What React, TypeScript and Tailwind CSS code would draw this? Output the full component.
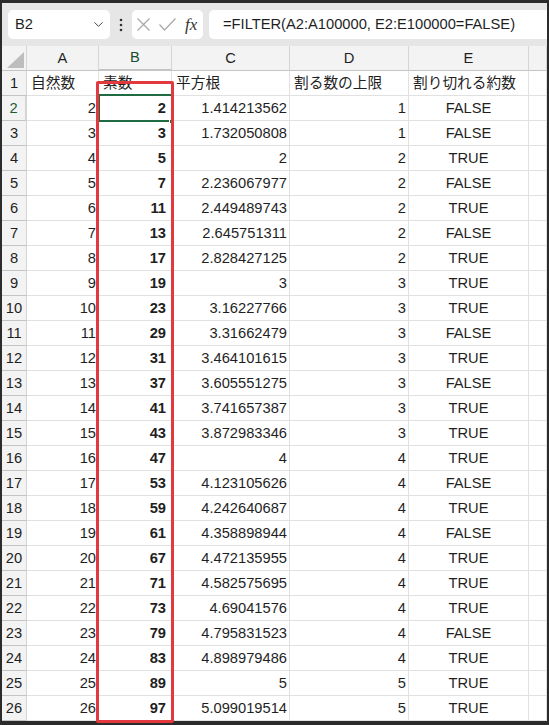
import { ChevronDown } from "lucide-react";

const primes = [2, 3, 5, 7, 11, 13, 17, 19, 23, 29, 31, 37, 41, 43, 47, 53, 59, 61, 67, 71, 73, 79, 83, 89, 97];
const roots = [
  "1.414213562", "1.732050808", "2", "2.236067977", "2.449489743", "2.645751311", "2.828427125",
  "3", "3.16227766", "3.31662479", "3.464101615", "3.605551275", "3.741657387", "3.872983346",
  "4", "4.123105626", "4.242640687", "4.358898944", "4.472135955", "4.582575695", "4.69041576",
  "4.795831523", "4.898979486", "5", "5.099019514",
];
const limits = [1, 1, 2, 2, 2, 2, 2, 3, 3, 3, 3, 3, 3, 3, 4, 4, 4, 4, 4, 4, 4, 4, 4, 5, 5];
const divisible = [
  false, false, true, false, true, false, true, true, true, false, true, false, true,
  true, true, false, true, false, true, true, true, false, true, true, true,
];

const cell = "flex items-center border-r border-b border-[#e1e1e1] bg-white overflow-hidden whitespace-nowrap";
const head = "flex items-center justify-center border-r border-b border-r-[#d5d5d5] border-b-[#c4c4c4] bg-[#f3f3f3]";

export default function App() {
  return (
    <div className="relative w-[549px] h-[725px] bg-[#2b2b2b] pt-[3px] px-[2px] font-['Liberation_Sans','Noto_Sans_CJK_JP',sans-serif] text-[14.7px] text-[#1f1f1f] overflow-hidden">
      {/* formula bar */}
      <div className="h-[43px] bg-[#e6e6e6] flex items-start pt-[7px] pl-[6px]">
        <div className="w-[102px] h-[29px] bg-white rounded-[5px] flex items-center justify-between pl-[7px] pr-[4px]">
          <span>B2</span>
          <ChevronDown size={15} strokeWidth={1.6} className="text-[#444]" />
        </div>
        <div className="w-[22px] h-[29px] flex items-center justify-center">
          <svg width="4" height="14" viewBox="0 0 4 14">
            <circle cx="2" cy="2" r="1.3" fill="#333" />
            <circle cx="2" cy="7" r="1.3" fill="#333" />
            <circle cx="2" cy="12" r="1.3" fill="#333" />
          </svg>
        </div>
        <div className="w-[71px] h-[29px] bg-white rounded-[5px] flex items-center pl-[5px] gap-[9px]">
          <svg width="13" height="13" viewBox="0 0 13 13">
            <path d="M0.5 0.5 L12.5 12.5 M12.5 0.5 L0.5 12.5" stroke="#a8a8a8" strokeWidth="1.2" fill="none" />
          </svg>
          <svg width="17" height="13" viewBox="0 0 17 13">
            <path d="M0.5 6.5 L5.5 12 L16.5 0.5" stroke="#a8a8a8" strokeWidth="1.2" fill="none" />
          </svg>
          <span className="font-['Liberation_Serif',serif] italic text-[17px] text-[#333] leading-none">fx</span>
        </div>
        <div className="ml-[6px] flex-1 h-[29px] bg-white rounded-l-[5px] flex items-center pl-[14px] whitespace-nowrap">
          =FILTER(A2:A100000, E2:E100000=FALSE)
        </div>
      </div>

      {/* sheet */}
      <div className="grid grid-cols-[25px_72px_73px_118px_119px_120px_18px] auto-rows-[25px]">
        <div className={`${head} relative`}>
          <svg className="absolute right-[2px] bottom-[2px]" width="17" height="16" viewBox="0 0 17 16">
            <path d="M17 0 L17 16 L0 16 Z" fill="#bdbdbd" />
          </svg>
        </div>
        <div className={head}>A</div>
        <div className={`${head} bg-[#d2d2d2] border-b-2 border-b-[#1e6b41] text-[#1b4d31]`}>B</div>
        <div className={head}>C</div>
        <div className={head}>D</div>
        <div className={head}>E</div>
        <div className={head}></div>

        <div className={head}>1</div>
        <div className={`${cell} pl-[4px]`}>自然数</div>
        <div className={`${cell} pl-[4px]`}>素数</div>
        <div className={`${cell} pl-[4px]`}>平方根</div>
        <div className={`${cell} pl-[4px]`}>割る数の上限</div>
        <div className={`${cell} pl-[4px]`}>割り切れる約数</div>
        <div className={cell}></div>

        {primes.map((p, i) => {
          const n = i + 2;
          return [
            <div
              key={`h${n}`}
              className={n === 2 ? `${head} bg-[#d2d2d2] border-r-2 border-r-[#1e6b41] text-[#1e5a3a]` : head}
            >
              {n}
            </div>,
            <div key={`a${n}`} className={`${cell} justify-end pr-[2px]`}>{n}</div>,
            <div key={`b${n}`} className={`${cell} justify-end pr-[5px] font-bold`}>{p}</div>,
            <div key={`c${n}`} className={`${cell} justify-end pr-[2px]`}>{roots[i]}</div>,
            <div key={`d${n}`} className={`${cell} justify-end pr-[2px]`}>{limits[i]}</div>,
            <div key={`e${n}`} className={`${cell} justify-center`}>{divisible[i] ? "TRUE" : "FALSE"}</div>,
            <div key={`f${n}`} className={cell}></div>,
          ];
        })}
      </div>

      {/* active cell B2 */}
      <div className="absolute left-[98px] top-[94px] w-[75px] h-[28px] border-2 border-[#1e6b41]" />
      <div className="absolute left-[169px] top-[119px] w-[5px] h-[5px] bg-[#1e6b41] border border-white" />

      {/* highlight box */}
      <div className="absolute left-[96px] top-[81px] w-[78px] h-[642px] border-[3px] border-[#e1393d] rounded-[2px]" />
    </div>
  );
}
